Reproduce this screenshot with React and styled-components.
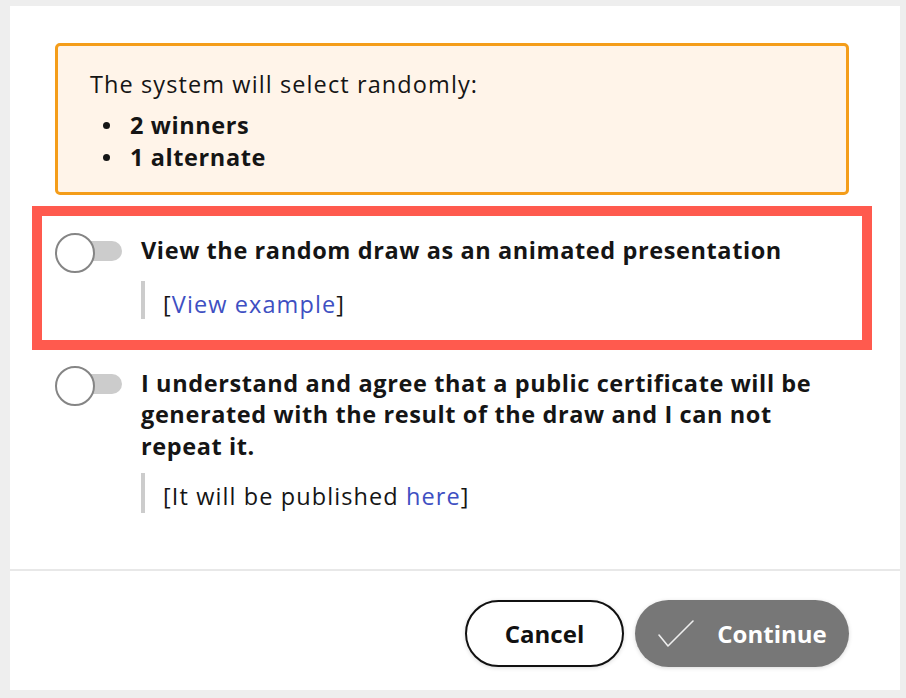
import React from "react";
import styled, { createGlobalStyle } from "styled-components";

const Global = createGlobalStyle`
  html, body { margin: 0; padding: 0; background: #eeeeee; }
  body { font-family: "Open Sans", "Noto Sans", "Liberation Sans", sans-serif; color: #151515; }
  * { box-sizing: border-box; }
`;

const Page = styled.div`
  width: 906px;
  height: 698px;
  padding: 6px 6px 8px 10px;
  background: #eeeeee;
`;

const Panel = styled.div`
  height: 100%;
  background: #ffffff;
  display: flex;
  flex-direction: column;
`;

const Body = styled.div`
  flex: 1;
  padding: 37px 51px 0 45px;
`;

const Notice = styled.div`
  border: 3px solid #f49d1a;
  border-radius: 5px;
  background: #fff4e9;
  padding: 22px 32px 19px;
  font-size: 23.5px;
  line-height: 32px;
`;

const NoticeText = styled.p`
  margin: 0 0 9px;
  letter-spacing: 1.1px;
`;

const List = styled.ul`
  margin: 0;
  padding: 0;
  list-style: none;
  font-weight: 700;
  letter-spacing: 0.6px;
`;

const Item = styled.li`
  display: flex;
  align-items: center;
  &::before {
    content: "";
    flex: none;
    width: 7px;
    height: 7px;
    border-radius: 50%;
    background: #151515;
    margin: 1px 20px 0 13px;
  }
`;

const Highlight = styled.div`
  margin: 11px -23px 0;
  border: 10px solid #ff5a4e;
  padding: 19px 13px 21px;
`;

const Option = styled.div`
  display: flex;
  align-items: flex-start;
  margin-top: ${(p) => p.$top || 0}px;
`;

const Toggle = styled.span`
  position: relative;
  flex: none;
  width: 67px;
  height: 32px;
  margin-right: 19px;
  &::before {
    content: "";
    position: absolute;
    left: 5px;
    right: 0;
    top: 6px;
    height: 20px;
    border-radius: 10px;
    background: #cccccc;
  }
  &::after {
    content: "";
    position: absolute;
    left: 0;
    top: -2px;
    width: 36px;
    height: 36px;
    border-radius: 50%;
    border: 2px solid #858585;
    background: #ffffff;
  }
`;

const OptionText = styled.div`
  flex: 1;
`;

const Label = styled.div`
  max-width: 690px;
  font-size: 23.5px;
  line-height: 31.5px;
  font-weight: 700;
  letter-spacing: 0.6px;
`;

const Sub = styled.div`
  margin-top: ${(p) => p.$gap}px;
  border-left: 4px solid #cccccc;
  padding: 8px 0 0 18px;
  height: ${(p) => p.$h}px;
  font-size: 23.5px;
  line-height: 30px;
  letter-spacing: 1.1px;
`;

const Link = styled.a`
  color: #3e4fc2;
  text-decoration: none;
`;

const Divider = styled.div`
  height: 2px;
  background: #e8e8e8;
`;

const Footer = styled.div`
  height: 119px;
  display: flex;
  justify-content: flex-end;
  align-items: flex-start;
  gap: 11px;
  padding: 29px 51px 0 0;
`;

const Button = styled.button`
  height: 67px;
  border-radius: 34px;
  font-family: inherit;
  font-size: 24px;
  font-weight: 700;
  display: flex;
  align-items: center;
  justify-content: center;
  gap: 22px;
  box-shadow: 0 1px 4px rgba(0, 0, 0, 0.15);
  ${(p) =>
    p.$primary
      ? `
    width: 214px;
    background: #777777;
    color: #ffffff;
    border: none;
    padding-right: 6px;
  `
      : `
    width: 159px;
    background: #ffffff;
    color: #111111;
    border: 2px solid #111111;
  `}
`;

export default function App() {
  return (
    <>
      <Global />
      <Page>
        <Panel>
          <Body>
            <Notice>
              <NoticeText>The system will select randomly:</NoticeText>
              <List>
                <Item>2 winners</Item>
                <Item>1 alternate</Item>
              </List>
            </Notice>
            <Highlight>
              <Option>
                <Toggle />
                <OptionText>
                  <Label>View the random draw as an animated presentation</Label>
                  <Sub $gap={14} $h={38}>
                    [<Link href="#">View example</Link>]
                  </Sub>
                </OptionText>
              </Option>
            </Highlight>
            <Option $top={18}>
              <Toggle />
              <OptionText>
                <Label>
                  I understand and agree that a public certificate will be generated with the result of
                  the draw and I can not repeat it.
                </Label>
                <Sub $gap={11} $h={40}>
                  [It will be published <Link href="#">here</Link>]
                </Sub>
              </OptionText>
            </Option>
          </Body>
          <Divider />
          <Footer>
            <Button>Cancel</Button>
            <Button $primary>
              <svg width="38" height="32" viewBox="0 0 38 32" fill="none">
                <path d="M2 17 L11 28 L36 3" stroke="#eeeeee" strokeWidth="1.6" strokeLinecap="round" strokeLinejoin="round" />
              </svg>
              Continue
            </Button>
          </Footer>
        </Panel>
      </Page>
    </>
  );
}
